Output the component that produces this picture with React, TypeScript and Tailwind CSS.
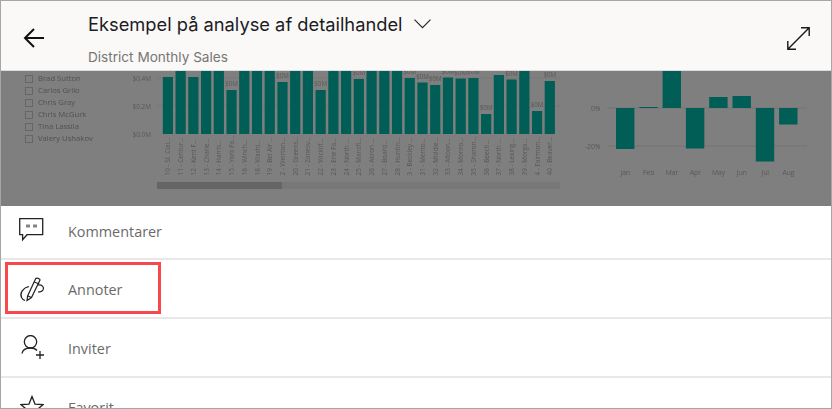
const labels = ["10 - St. Clai...","11 - Centur...","12 - Kent F...","13 - Charle...","14 - Harris...","15 - York Fa...","16 - Winch...","18 - Washi...","19 - Bel Air ...","2 - Weirton...","20 - Greens...","21 - Zanesv...","22 - Wicklif...","23 - Erie Fa...","24 - North ...","25 - Mansfi...","26 - Akron ...","27 - Board...","28 - Huntin...","3 - Beckley ...","31 - Mento...","32 - Middle...","33 - Altoon...","34 - Monro...","35 - Sharon...","36 - Beech...","37 - North ...","38 - Lexing...","39 - Morga...","4 - Fairmon...","40 - Beaver..."];
const tops = [77,60,77,60,60,90,60,60,60,82,60,60,90,60,60,79,60,60,60,78,82.5,85,77.5,78.5,78,114,75,79.5,60,111,81];
const people = ["Brad Sutton","Carlos Grilo","Chris Gray","Chris McGurk","Tina Lassila","Valery Ushakov"];
const months: [string, number, number][] = [["Jan",108,149],["Feb",107,108],["Mar",60,108],["Apr",108,148.5],["May",97,108],["Jun",96,108],["Jul",108,161.5],["Aug",108,124.5]];

function BarChart() {
  return (
    <svg width="440" height="135" viewBox="130 71 440 135" className="shrink-0 blur-[0.3px]" style={{ fontFamily: "'Open Sans', sans-serif" }}>
      <line x1="157" x2="560" y1="106" y2="106" stroke="#787878" />
      <line x1="157" x2="560" y1="78" y2="78" stroke="#787878" />
      {[["$0.4M", 80.5], ["$0.2M", 108.5], ["$0.0M", 136.5]].map(([t, y]) => (
        <text key={t as string} x="151" y={y as number} textAnchor="end" fontSize="6.4" fill="#585858">{t}</text>
      ))}
      {labels.map((l, i) => {
        const x = 162.8 + i * 12.73;
        return (
          <g key={l}>
            <rect x={x} y={tops[i]} width="10.2" height={134 - tops[i]} fill="#015e56" />
            {tops[i] > 77.2 && (
              <text x={x + 5.1} y={tops[i] - 4} textAnchor="middle" fontSize="6.2" fill="#585858">$0M</text>
            )}
            <text transform={`translate(${x + 7.6},175.5) rotate(-90)`} fontSize="6.4" fill="#585858">{l}</text>
          </g>
        );
      })}
      <rect x="157" y="182" width="403" height="7" fill="#787878" />
      <rect x="157" y="182" width="125" height="7" fill="#656565" />
    </svg>
  );
}

function VarianceChart() {
  return (
    <svg width="260" height="135" viewBox="570 71 260 135" className="shrink-0 blur-[0.3px]" style={{ fontFamily: "'Open Sans', sans-serif" }}>
      <line x1="607" x2="807" y1="108" y2="108" stroke="#757575" />
      <line x1="607" x2="807" y1="146" y2="146" stroke="#757575" />
      <text x="600.5" y="110.5" textAnchor="end" fontSize="6.8" fill="#585858">0%</text>
      <text x="600.5" y="148.5" textAnchor="end" fontSize="6.8" fill="#585858">-20%</text>
      {months.map(([m, a, b], i) => {
        const x = 616 + i * 23.3;
        return (
          <g key={m}>
            <rect x={x} y={a} width="18.4" height={b - a} fill="#015e56" />
            <text x={x + 9.4} y="175" textAnchor="middle" fontSize="6.8" fill="#585858">{m}</text>
          </g>
        );
      })}
    </svg>
  );
}

function Row({ label, icon, first }: { label: string; icon: React.ReactNode; first?: boolean }) {
  return (
    <div className={`flex items-center shrink-0 border-b-2 border-[#e8e8e8] ${first ? "h-[54px]" : "h-[59px]"}`}>
      <div className="w-[67px] flex pl-[18px] shrink-0">{icon}</div>
      <span className={`text-[14.4px] text-[#6a6a6a] ${first ? "" : "pt-[2px]"}`} style={{ fontFamily: "'Open Sans', sans-serif" }}>{label}</span>
    </div>
  );
}

export default function App() {
  return (
    <div className="w-[832px] h-[409px] overflow-hidden bg-white border border-[#a6a6a6] flex flex-col">
      <header className="h-[70px] shrink-0 bg-[#faf9f7] border-b border-[#dcdcdc] flex items-start" style={{ fontFamily: "Inter, sans-serif" }}>
        <div className="w-[87px] shrink-0 pl-[22px] pt-[27px]">
          <svg width="22" height="20" viewBox="0 0 22 20" fill="none" stroke="#111" strokeWidth="2">
            <path d="M21 10H2M11 1l-9 9 9 9" />
          </svg>
        </div>
        <div className="flex-1 pt-[10px]">
          <div className="flex items-center gap-[11px] h-[26px]">
            <span className="text-[18.3px] text-[#1c1c24] leading-none">Eksempel på analyse af detailhandel</span>
            <svg width="17" height="10" viewBox="0 0 17 10" fill="none" stroke="#222" strokeWidth="1.1">
              <path d="M.5.7l8 8 8-8" />
            </svg>
          </div>
          <div className="text-[13.6px] text-[#767676] mt-[10px] leading-[20px]">District Monthly Sales</div>
        </div>
        <div className="pr-[21px] pt-[26px]">
          <svg width="23" height="23" viewBox="0 0 23 23" fill="none" stroke="#1a1a1a" strokeWidth="1.4">
            <path d="M.8 22.200L22.200.8M14 .8h8.200V9M.8 14v8.200H9" />
          </svg>
        </div>
      </header>

      <section className="h-[135px] shrink-0 bg-[#7f7f7f] flex overflow-hidden">
        <div className="w-[129px] shrink-0 pl-[24px] pt-[2px] blur-[0.3px]" style={{ fontFamily: "'Open Sans', sans-serif" }}>
          {people.map((p) => (
            <div key={p} className="flex items-center gap-[5px] h-[12px] text-[7.7px] text-[#505050] whitespace-nowrap">
              <span className="w-[8px] h-[8px] border border-[#666] shrink-0" />
              {p}
            </div>
          ))}
        </div>
        <BarChart />
        <VarianceChart />
      </section>

      <main className="flex-1 relative overflow-hidden">
        <Row
          first
          label="Kommentarer"
          icon={
            <svg width="25" height="24" viewBox="0 0 25 24" fill="none" stroke="#222" strokeWidth="1.3" className="mb-[5px]">
              <path d="M.7.7h23v16H8l-4.400 5v-5H.7z" />
              <path d="M8 6.500v3M10 6.500v3M15 6.500v3M17 6.500v3" strokeWidth="1.1" />
            </svg>
          }
        />
        <Row
          label="Annoter"
          icon={
            <svg width="26" height="26" viewBox="0 0 26 26" fill="none" stroke="#222" strokeWidth="1.2">
              <path d="M8 24.500l.6-4.500L16.500 3c.8-1.600 4.800-.6 4.500 1L12.500 21.500z" />
              <path d="M15.200 6l5 2M9 20l3.500 1.500" />
              <path d="M10 10.500C3.500 12 .5 17.500 2.500 21.500c.7 1.400 2 2.500 3.500 3" />
              <path d="M19 9c4-.5 6.500 2 5 5-.8 1.300-2.500 2-5 2" />
            </svg>
          }
        />
        <Row
          label="Inviter"
          icon={
            <svg width="25" height="26" viewBox="0 0 25 26" fill="none" stroke="#222" strokeWidth="1.3" className="ml-[2px]">
              <circle cx="9.500" cy="6.800" r="6.200" />
              <path d="M1 18.500c.6-3.700 4-5.500 8.500-5.500 2.800 0 5 .8 6.500 2.500" />
              <path d="M19 16v8M15 20h8" />
            </svg>
          }
        />
        <Row
          label="Favorit"
          icon={
            <svg width="24" height="24" viewBox="0 0 24 24" fill="none" stroke="#222" strokeWidth="1.3" className="ml-[1px]">
              <path d="M12 1.500l3 7.600 8.200.5-6.400 5.200 2.100 8-6.900-4.400-6.900 4.400 2.100-8L.8 9.600 9 9.100z" />
            </svg>
          }
        />
        <div className="absolute left-[4px] top-[56px] w-[156px] h-[52px] border-[3px] border-[#f6484d]" />
      </main>
    </div>
  );
}
